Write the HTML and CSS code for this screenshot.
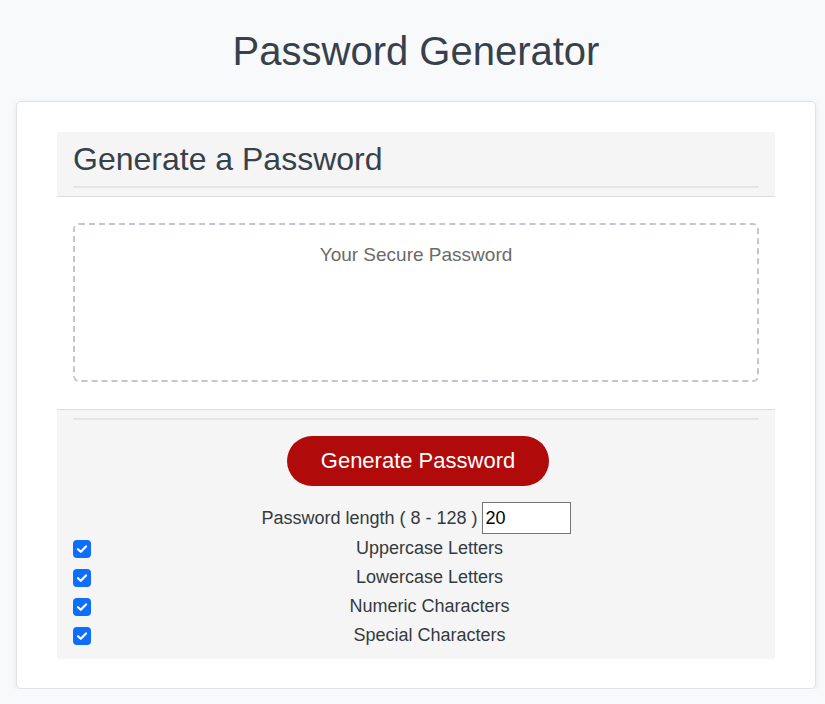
FILE: index.html
```html
<!DOCTYPE html>
<html lang="en">
<head>
<meta charset="utf-8">
<title>Password Generator</title>
<link rel="stylesheet" href="styles.css">
</head>
<body>
<div class="wrapper">
  <header class="page-header">
    <h1>Password Generator</h1>
  </header>
  <div class="card">
    <div class="panel">
      <div class="panel-header">
        <h2>Generate a Password</h2>
        <div class="rule"></div>
      </div>
      <div class="panel-body">
        <textarea readonly class="password-box" placeholder="Your Secure Password" aria-label="Generated Password"></textarea>
      </div>
      <div class="panel-footer">
        <div class="rule"></div>
        <div class="btn-row">
          <button class="btn-generate" type="button">Generate Password</button>
        </div>
        <div class="length-row">
          <label for="length">Password length ( 8 - 128 )</label>
          <input id="length" class="length-input" type="text" value="20">
        </div>
        <div class="option-row">
          <span class="check"><svg viewBox="0 0 18 18" width="18" height="18"><path d="M5 9.2 L7.8 11.8 L13 6.4" fill="none" stroke="#fff" stroke-width="2.2" stroke-linecap="round" stroke-linejoin="round"/></svg></span>
          <span class="option-label">Uppercase Letters</span>
        </div>
        <div class="option-row">
          <span class="check"><svg viewBox="0 0 18 18" width="18" height="18"><path d="M5 9.2 L7.8 11.8 L13 6.4" fill="none" stroke="#fff" stroke-width="2.2" stroke-linecap="round" stroke-linejoin="round"/></svg></span>
          <span class="option-label">Lowercase Letters</span>
        </div>
        <div class="option-row">
          <span class="check"><svg viewBox="0 0 18 18" width="18" height="18"><path d="M5 9.2 L7.8 11.8 L13 6.4" fill="none" stroke="#fff" stroke-width="2.2" stroke-linecap="round" stroke-linejoin="round"/></svg></span>
          <span class="option-label">Numeric Characters</span>
        </div>
        <div class="option-row">
          <span class="check"><svg viewBox="0 0 18 18" width="18" height="18"><path d="M5 9.2 L7.8 11.8 L13 6.4" fill="none" stroke="#fff" stroke-width="2.2" stroke-linecap="round" stroke-linejoin="round"/></svg></span>
          <span class="option-label">Special Characters</span>
        </div>
      </div>
    </div>
  </div>
</div>
</body>
</html>
```
FILE: styles.css
```css
* { box-sizing: border-box; }

html, body {
  margin: 0;
  padding: 0;
  background: #f8f9fb;
  font-family: "Liberation Sans", Arial, sans-serif;
  color: #343a40;
}

.wrapper {
  width: 800px;
  margin-left: 16px;
}

.page-header h1 {
  margin: 28px 0 27px;
  font-size: 40px;
  line-height: 46px;
  font-weight: 400;
  text-align: center;
  color: #37414b;
}

.card {
  background: #fff;
  border: 1px solid #dfe2e6;
  border-radius: 5px;
  box-shadow: 0 2px 6px rgba(0, 0, 0, 0.08);
  padding: 30px 40px 29px;
}

.panel {
  border-radius: 3px;
  overflow: hidden;
}

.panel-header {
  background: #f5f5f5;
  padding: 9px 16px 8px;
  border-bottom: 1px solid #dcdcdc;
}

.panel-header h2 {
  margin: 0 0 8px;
  font-size: 32px;
  line-height: 37px;
  font-weight: 400;
  color: #37414b;
}

.rule {
  height: 2px;
  background: #e5e5e5;
}

.panel-body {
  background: #fff;
  padding: 26px 16px 27px;
}

.password-box {
  display: block;
  width: 100%;
  height: 159px;
  border: 2px dashed #c2c6cd;
  border-radius: 6px;
  padding: 19px 10px 10px;
  resize: none;
  outline: none;
  font-family: "Liberation Sans", Arial, sans-serif;
  font-size: 19px;
  line-height: 22px;
  text-align: center;
  color: #444;
  background: #fff;
}

.password-box::placeholder {
  color: #6a6a6a;
}

.panel-footer {
  background: #f5f5f5;
  border-top: 1px solid #dcdcdc;
  padding: 8px 16px 9px;
}

.btn-row {
  display: flex;
  justify-content: center;
  padding: 16px 0 16px 4px;
}

.btn-generate {
  width: 262px;
  height: 50px;
  border: none;
  border-radius: 25px;
  background: #b00a0a;
  color: #fff;
  font-family: "Liberation Sans", Arial, sans-serif;
  font-size: 22px;
  cursor: pointer;
}

.length-row {
  display: flex;
  justify-content: center;
  align-items: center;
  gap: 4px;
  height: 32px;
  font-size: 18px;
}

.length-input {
  width: 89px;
  height: 32px;
  border: 1px solid #767676;
  border-radius: 0;
  padding: 0 3px;
  font-family: "Liberation Sans", Arial, sans-serif;
  font-size: 18px;
  color: #000;
  background: #fff;
}

.option-row {
  display: flex;
  align-items: center;
  height: 29px;
  gap: 9px;
  font-size: 18px;
}

.check {
  width: 18px;
  height: 18px;
  border-radius: 4px;
  background: #0d6efd;
  display: flex;
  flex: none;
}

.check svg { display: block; }

.option-label {
  flex: 1;
  text-align: center;
}
```
